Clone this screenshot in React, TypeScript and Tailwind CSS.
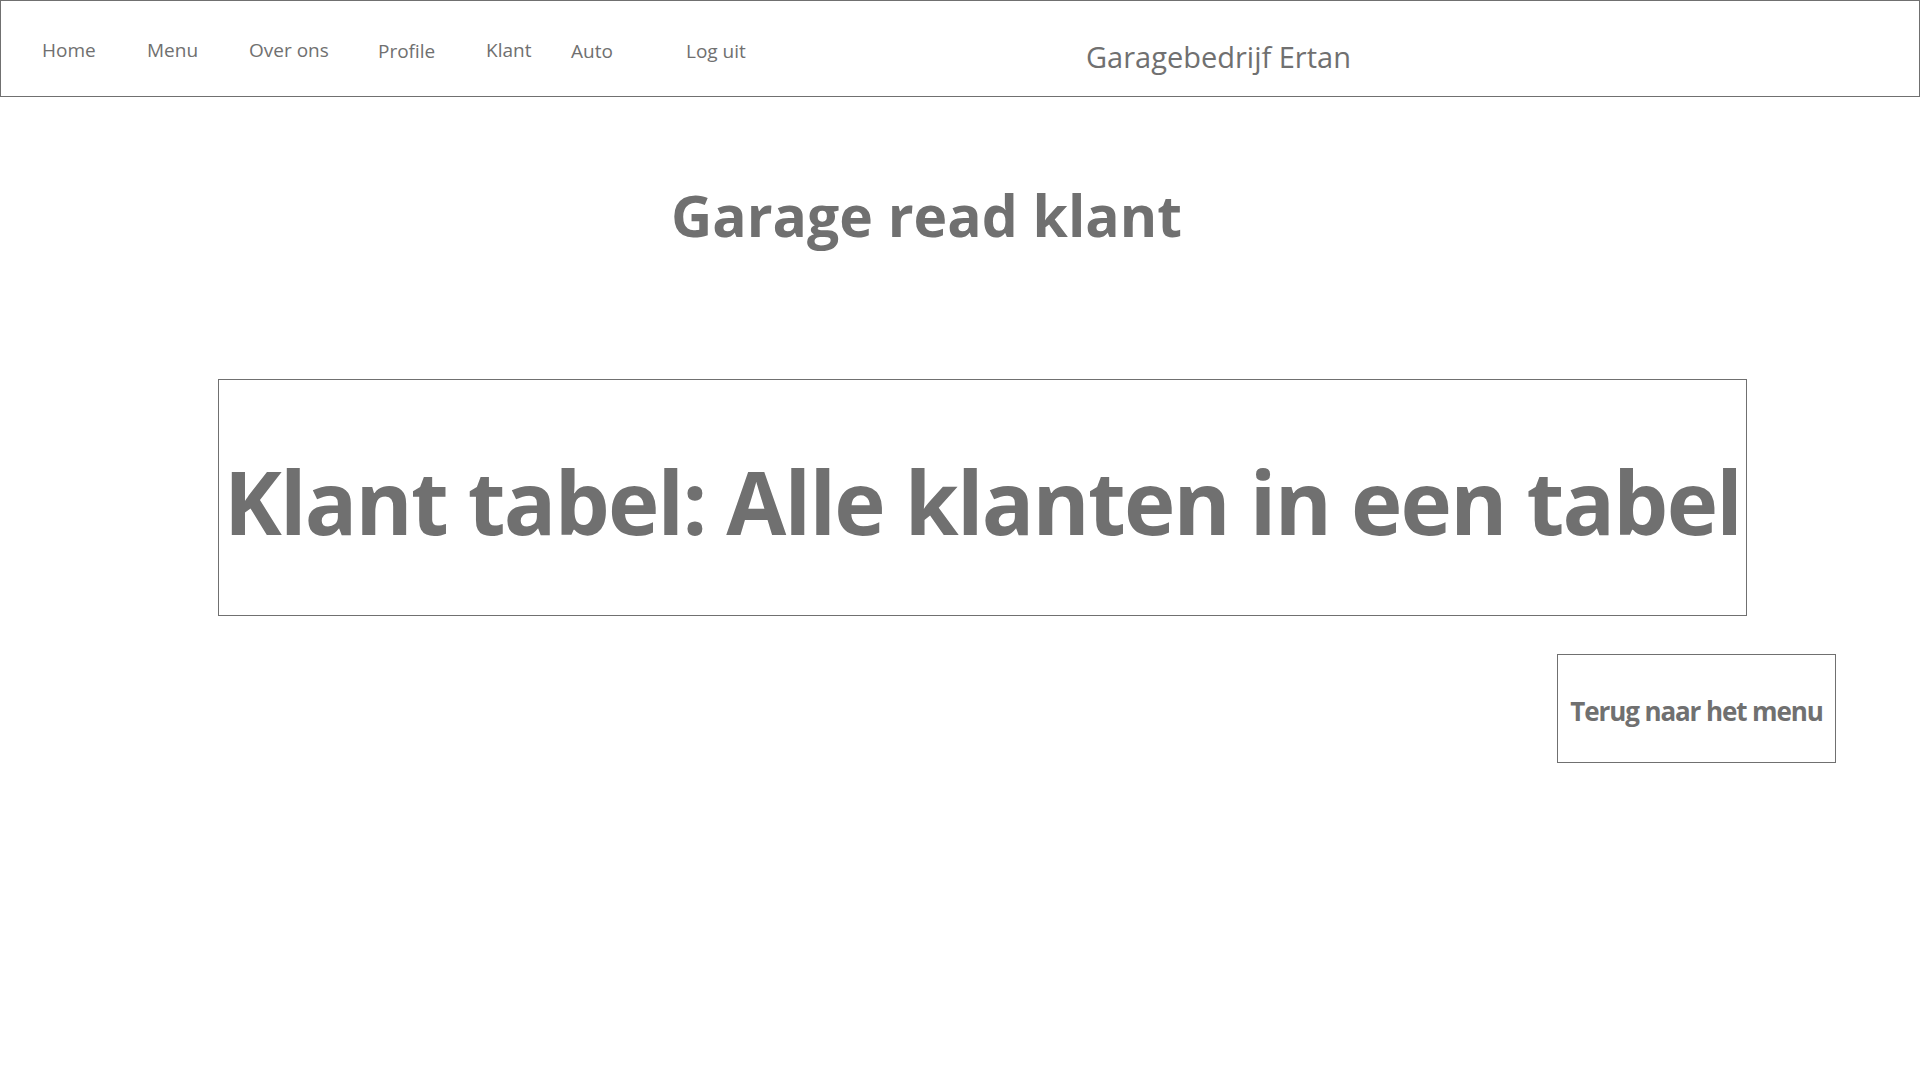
const navItems = [
  { label: "Home", w: "w-[105px]", low: false },
  { label: "Menu", w: "w-[102px]", low: false },
  { label: "Over ons", w: "w-[129px]", low: false },
  { label: "Profile", w: "w-[108px]", low: true },
  { label: "Klant", w: "w-[85px]", low: false },
  { label: "Auto", w: "w-[115px]", low: true },
  { label: "Log uit", w: "w-[400px]", low: true },
];

function Header() {
  return (
    <header className="h-[97px] border border-[#707070] flex items-center pl-[41px] pt-[4px]">
      {navItems.map((item) => (
        <a
          key={item.label}
          href="#"
          className={`${item.w} shrink-0 text-[19px] ${item.low ? "mt-[2px]" : ""}`}
        >
          {item.label}
        </a>
      ))}
      <span className="text-[29px] mt-[12px] whitespace-nowrap">Garagebedrijf Ertan</span>
    </header>
  );
}

export default function App() {
  return (
    <div className="min-h-screen bg-white text-[#707070] font-['Open_Sans',sans-serif]">
      <Header />

      <main className="flex flex-col">
        <h1 className="mt-[84px] pr-[67px] text-center text-[57px] leading-[68px] font-bold">
          Garage read klant
        </h1>

        <section className="mt-[130px] ml-[218px] w-[1529px] h-[237px] border border-[#707070] flex items-center justify-center pt-[8px]">
          <h2 className="text-[87px] font-bold tracking-[-1.75px] whitespace-nowrap">
            Klant tabel: Alle klanten in een tabel
          </h2>
        </section>

        <div className="mt-[38px] ml-[1557px]">
          <button className="w-[279px] h-[109px] border border-[#707070] bg-white pt-[5px] text-[26px] font-bold tracking-[-1.1px] whitespace-nowrap">
            Terug naar het menu
          </button>
        </div>
      </main>
    </div>
  );
}
